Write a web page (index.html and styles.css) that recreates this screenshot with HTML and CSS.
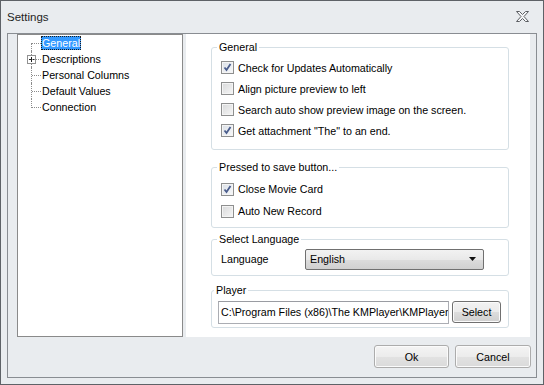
FILE: index.html
```html
<!DOCTYPE html>
<html lang="en">
<head>
    <meta charset="UTF-8">
    <meta name="viewport" content="width=device-width, initial-scale=1.0">
    <title>Settings</title>
    <link rel="stylesheet" href="styles.css">
</head>
<body>
    <div class="window">
        <div class="titlebar">
            <span class="title">Settings</span>
            <svg class="close" width="13" height="11" viewBox="0 0 13 11">
                <polygon points="0.5,0.5 3.5,0.5 6.5,3.5 9.5,0.5 12.5,0.5 8,5.5 12.5,10.5 9.5,10.5 6.5,7.5 3.5,10.5 0.5,10.5 5,5.5" fill="#f4f5f7" stroke="#5c5f63" stroke-width="1"/>
            </svg>
        </div>

        <div class="frame">
            <div class="content">
                <!-- page tree -->
                <div class="tree">
                    <div class="node first"><span class="branch"></span><span class="label selected">General</span></div>
                    <div class="node"><span class="branch"><svg class="expander" width="9" height="9" viewBox="0 0 9 9"><rect x="0.5" y="0.5" width="8" height="8" fill="#fff" stroke="#919191"/><path d="M2 4.5h5M4.5 2v5" stroke="#222" stroke-width="1"/></svg></span><span class="label">Descriptions</span></div>
                    <div class="node"><span class="branch"></span><span class="label">Personal Columns</span></div>
                    <div class="node"><span class="branch"></span><span class="label">Default Values</span></div>
                    <div class="node last"><span class="branch"></span><span class="label">Connection</span></div>
                </div>

                <!-- general page -->
                <div class="panel">
                    <fieldset class="group group-general">
                        <legend>General</legend>
                        <div class="option"><span class="box checked"><svg width="11" height="11" viewBox="0 0 11 11"><path d="M2.5 5.5l2 2.5 4-6" fill="none" stroke="#4a5d8c" stroke-width="1.8"/></svg></span>Check for Updates Automatically</div>
                        <div class="option"><span class="box"></span>Align picture preview to left</div>
                        <div class="option"><span class="box"></span>Search auto show preview image on the screen.</div>
                        <div class="option"><span class="box checked"><svg width="11" height="11" viewBox="0 0 11 11"><path d="M2.5 5.5l2 2.5 4-6" fill="none" stroke="#4a5d8c" stroke-width="1.8"/></svg></span>Get attachment "The" to an end.</div>
                    </fieldset>

                    <fieldset class="group group-save">
                        <legend>Pressed to save button...</legend>
                        <div class="option"><span class="box checked"><svg width="11" height="11" viewBox="0 0 11 11"><path d="M2.5 5.5l2 2.5 4-6" fill="none" stroke="#4a5d8c" stroke-width="1.8"/></svg></span>Close Movie Card</div>
                        <div class="option"><span class="box"></span>Auto New Record</div>
                    </fieldset>

                    <fieldset class="group group-language">
                        <legend>Select Language</legend>
                        <div class="field">
                            <span class="field-label">Language</span>
                            <div class="dropdown">
                                <span>English</span>
                                <svg width="7" height="4" viewBox="0 0 7 4"><path d="M0 0h7L3.5 4z" fill="#111"/></svg>
                            </div>
                        </div>
                    </fieldset>

                    <fieldset class="group group-player">
                        <legend>Player</legend>
                        <div class="field">
                            <div class="path">C:\Program Files (x86)\The KMPlayer\KMPlayer</div>
                            <button class="small-button">Select</button>
                        </div>
                    </fieldset>
                </div>
            </div>

            <div class="buttons">
                <button class="dialog-button">Ok</button>
                <button class="dialog-button">Cancel</button>
            </div>
        </div>
    </div>
</body>
</html>
```

FILE: styles.css
```css
body {
    margin: 0;
    font-family: "Liberation Sans", Arial, sans-serif;
    font-size: 10.7px;
    color: #000;
    background-color: #e9ecef;
}

.window {
    width: 544px;
    height: 385px;
    box-sizing: border-box;
    border: 1px solid #5e6267;
    background-color: #e9ecef;
    display: flex;
    flex-direction: column;
}

.titlebar {
    height: 32px;
    display: flex;
    align-items: center;
    justify-content: space-between;
    padding: 0 14px 0 6px;
    flex-shrink: 0;
}

.title {
    font-size: 11.5px;
    color: #1e1e1e;
    margin-top: -1px;
}

.close {
    display: block;
    margin-top: -1px;
}

.frame {
    flex: 1;
    margin: 0 6px 6px 6px;
    border: 1px solid #898d92;
    display: flex;
    flex-direction: column;
}

.content {
    display: flex;
    gap: 3px;
    padding: 0 6px 0 9px;
}

/* tree */
.tree {
    width: 166px;
    height: 303px;
    box-sizing: border-box;
    border: 1px solid #8a8a8a;
    background-color: #fff;
}

.node {
    height: 16px;
    display: flex;
    align-items: center;
    padding-left: 13px;
}

.branch {
    align-self: stretch;
    width: 10px;
    box-sizing: border-box;
    border-left: 1px dotted #8c8c8c;
    position: relative;
}

.branch::after {
    content: "";
    position: absolute;
    left: 0;
    top: 8px;
    width: 9px;
    border-top: 1px dotted #8c8c8c;
}

.node.first .branch {
    margin-top: 8px;
}

.node.first .branch::after {
    top: 0;
}

.node.last .branch {
    align-self: flex-start;
    height: 9px;
}

.expander {
    position: absolute;
    left: -5px;
    top: 4px;
}

.label {
    height: 14px;
    line-height: 14px;
    padding: 0 1px;
    white-space: nowrap;
}

.label.selected {
    background-color: #3399ff;
    color: #fff;
    outline: 1px dotted #1c1c1c;
    outline-offset: -1px;
}

/* page panel */
.panel {
    width: 344px;
    height: 303px;
    box-sizing: border-box;
    background-color: #fff;
    padding: 7px 21px 0 25px;
}

.group {
    margin: 0;
    border: 1px solid #d5dfe5;
    border-radius: 3px;
    padding: 3px 9px 8px 9px;
}

.group legend {
    padding: 0 2px;
    margin-left: -4px;
    line-height: 13px;
    color: #000;
}

.option {
    height: 21px;
    display: flex;
    align-items: center;
    white-space: nowrap;
}

.group-save {
    margin-top: 11px;
    padding-top: 4px;
    padding-bottom: 5px;
}

.group-save .option {
    height: 22px;
}

.box {
    width: 13px;
    height: 13px;
    box-sizing: border-box;
    border: 1px solid #8e8f8f;
    background: linear-gradient(135deg, #d8d9da, #f6f6f6);
    box-shadow: inset 0 0 0 1px #f4f4f4;
    margin-right: 4px;
    display: flex;
    align-items: center;
    justify-content: center;
}

.box.checked {
    background: linear-gradient(135deg, #dadfe6, #f8f9fa);
}

.group-language {
    margin-top: 5px;
    padding-top: 2px;
    padding-bottom: 5px;
}

.field {
    height: 22px;
    display: flex;
    align-items: center;
}

.field-label {
    width: 84px;
}

.dropdown {
    width: 179px;
    height: 21px;
    box-sizing: border-box;
    border: 1px solid #707070;
    border-radius: 2px;
    background: linear-gradient(#f2f2f2, #e9e9e9 50%, #dcdcdc 51%, #d0d0d0);
    display: flex;
    align-items: center;
    justify-content: space-between;
    padding: 0 7px 0 4px;
}

.group-player {
    margin-top: 8px;
    padding: 4px 7px 3px 6px;
}

.group-player .field {
    height: 23px;
    gap: 3px;
}

.path {
    width: 231px;
    height: 23px;
    box-sizing: border-box;
    border: 1px solid #abadb3;
    border-top-color: #9a9ca2;
    background-color: #fff;
    line-height: 21px;
    padding-left: 2px;
    white-space: nowrap;
    overflow: hidden;
}

button {
    font-family: "Liberation Sans", Arial, sans-serif;
    font-size: 10.7px;
    color: #000;
    border: 1px solid #707070;
    border-radius: 3px;
    background: linear-gradient(#f2f2f2, #ebebeb 50%, #dddddd 51%, #cfcfcf);
    box-shadow: inset 0 0 0 1px #fbfbfb;
    padding: 0;
}

.small-button {
    width: 49px;
    height: 22px;
    margin-top: -1px;
}

.buttons {
    display: flex;
    justify-content: flex-end;
    gap: 6px;
    padding: 8px 5px 0 0;
}

.dialog-button {
    width: 75px;
    height: 23px;
    border-color: #acacac;
    background: linear-gradient(#f4f4f4, #ececec 50%, #e2e2e2 51%, #dadada);
}

.dialog-button + .dialog-button {
    width: 76px;
}
```
